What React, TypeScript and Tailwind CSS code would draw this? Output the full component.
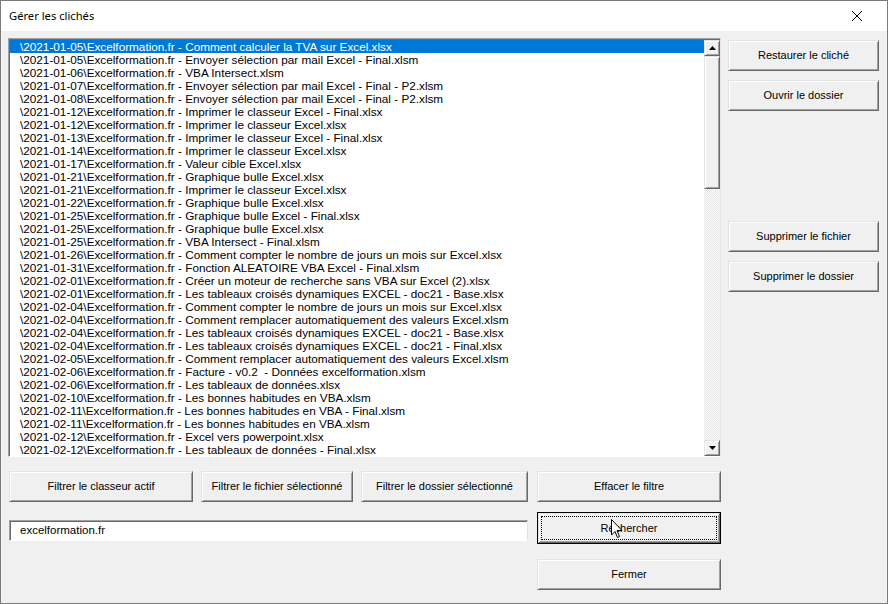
import type { ReactNode } from "react";

const files = [
  "\\2021-01-05\\Excelformation.fr - Comment calculer la TVA sur Excel.xlsx",
  "\\2021-01-05\\Excelformation.fr - Envoyer sélection par mail Excel - Final.xlsm",
  "\\2021-01-06\\Excelformation.fr - VBA Intersect.xlsm",
  "\\2021-01-07\\Excelformation.fr - Envoyer sélection par mail Excel - Final - P2.xlsm",
  "\\2021-01-08\\Excelformation.fr - Envoyer sélection par mail Excel - Final - P2.xlsm",
  "\\2021-01-12\\Excelformation.fr - Imprimer le classeur Excel - Final.xlsx",
  "\\2021-01-12\\Excelformation.fr - Imprimer le classeur Excel.xlsx",
  "\\2021-01-13\\Excelformation.fr - Imprimer le classeur Excel - Final.xlsx",
  "\\2021-01-14\\Excelformation.fr - Imprimer le classeur Excel.xlsx",
  "\\2021-01-17\\Excelformation.fr - Valeur cible Excel.xlsx",
  "\\2021-01-21\\Excelformation.fr - Graphique bulle Excel.xlsx",
  "\\2021-01-21\\Excelformation.fr - Imprimer le classeur Excel.xlsx",
  "\\2021-01-22\\Excelformation.fr - Graphique bulle Excel.xlsx",
  "\\2021-01-25\\Excelformation.fr - Graphique bulle Excel - Final.xlsx",
  "\\2021-01-25\\Excelformation.fr - Graphique bulle Excel.xlsx",
  "\\2021-01-25\\Excelformation.fr - VBA Intersect - Final.xlsm",
  "\\2021-01-26\\Excelformation.fr - Comment compter le nombre de jours un mois sur Excel.xlsx",
  "\\2021-01-31\\Excelformation.fr - Fonction ALEATOIRE VBA Excel - Final.xlsm",
  "\\2021-02-01\\Excelformation.fr - Créer un moteur de recherche sans VBA sur Excel (2).xlsx",
  "\\2021-02-01\\Excelformation.fr - Les tableaux croisés dynamiques EXCEL - doc21 - Base.xlsx",
  "\\2021-02-04\\Excelformation.fr - Comment compter le nombre de jours un mois sur Excel.xlsx",
  "\\2021-02-04\\Excelformation.fr - Comment remplacer automatiquement des valeurs Excel.xlsm",
  "\\2021-02-04\\Excelformation.fr - Les tableaux croisés dynamiques EXCEL - doc21 - Base.xlsx",
  "\\2021-02-04\\Excelformation.fr - Les tableaux croisés dynamiques EXCEL - doc21 - Final.xlsx",
  "\\2021-02-05\\Excelformation.fr - Comment remplacer automatiquement des valeurs Excel.xlsm",
  "\\2021-02-06\\Excelformation.fr - Facture - v0.2  - Données excelformation.xlsm",
  "\\2021-02-06\\Excelformation.fr - Les tableaux de données.xlsx",
  "\\2021-02-10\\Excelformation.fr - Les bonnes habitudes en VBA.xlsm",
  "\\2021-02-11\\Excelformation.fr - Les bonnes habitudes en VBA - Final.xlsm",
  "\\2021-02-11\\Excelformation.fr - Les bonnes habitudes en VBA.xlsm",
  "\\2021-02-12\\Excelformation.fr - Excel vers powerpoint.xlsx",
  "\\2021-02-12\\Excelformation.fr - Les tableaux de données - Final.xlsx",
];

const raised =
  "border border-t-[#e3e3e3] border-l-[#e3e3e3] border-b-[#696969] border-r-[#696969] bg-[#f0f0f0] shadow-[inset_1px_1px_0_#ffffff,inset_-1px_-1px_0_#a0a0a0]";

function Btn({ children, className = "" }: { children: ReactNode; className?: string }) {
  return (
    <div className={`${raised} flex items-center justify-center text-[11px] text-black ${className}`}>
      {children}
    </div>
  );
}

function Arrow({ up }: { up?: boolean }) {
  return (
    <div className={`${raised} flex h-[16px] w-[16px] items-center justify-center`}>
      <svg width="7" height="4" viewBox="0 0 7 4">
        {up ? <polygon points="0,4 7,4 3.5,0" fill="#000" /> : <polygon points="0,0 7,0 3.5,4" fill="#000" />}
      </svg>
    </div>
  );
}

export default function App() {
  return (
    <div
      className="flex h-[604px] w-[888px] flex-col border border-[#7a7a7a] bg-[#f0f0f0]"
      style={{ fontFamily: '"Liberation Sans", Arial, sans-serif' }}
    >
      {/* Title bar */}
      <div className="flex h-[30px] items-center justify-between bg-white pl-[8px] pr-[24px]">
        <span className="text-[11.2px] text-black" style={{ fontFamily: '"Noto Sans", "Open Sans", sans-serif' }}>
          Gérer les clichés
        </span>
        <svg width="12" height="12" viewBox="0 0 12 12">
          <path d="M1 1 L11 11 M11 1 L1 11" stroke="#000" strokeWidth="1" />
        </svg>
      </div>

      {/* Client area */}
      <div className="relative flex flex-1 flex-col pl-[7px] pt-[7px]">
        <div className="flex gap-[7px]">
          {/* List box */}
          <div className="flex h-[419px] w-[713px] border border-t-[#a0a0a0] border-l-[#a0a0a0] border-b-white border-r-[#e3e3e3] bg-white shadow-[inset_1px_1px_0_#696969]">
            <div className="flex-1 overflow-hidden pl-[1px] pt-[1px]">
              {files.map((f, i) => (
                <div
                  key={i}
                  className={`h-[13px] whitespace-pre pl-[10px] text-[11.75px] leading-[13px] ${
                    i === 0 ? "bg-[#0078d7] text-white" : "text-black"
                  }`}
                >
                  {f}
                </div>
              ))}
            </div>
            {/* Scrollbar */}
            <div className="flex w-[16px] flex-col pt-[1px]">
              <Arrow up />
              <div className={`${raised} h-[133px] w-[16px]`} />
              <div className="flex-1 bg-[repeating-conic-gradient(#e3e3e3_0_25%,#ffffff_0_50%)] bg-[length:2px_2px]" />
              <Arrow />
            </div>
          </div>

          {/* Right buttons */}
          <div className="flex w-[151px] flex-col pt-[2px]">
            <Btn className="h-[31px]">Restaurer le cliché</Btn>
            <Btn className="mt-[9px] h-[31px]">Ouvrir le dossier</Btn>
            <Btn className="mt-[110px] h-[31px]">Supprimer le fichier</Btn>
            <Btn className="mt-[9px] h-[31px]">Supprimer le dossier</Btn>
          </div>
        </div>

        {/* Bottom controls */}
        <div className="ml-[1px] mt-[14px] flex w-[712px] flex-col">
          <div className="flex">
            <Btn className="h-[31px] w-[184px]">Filtrer le classeur actif</Btn>
            <Btn className="ml-[8px] h-[31px] w-[152px]">Filtrer le fichier sélectionné</Btn>
            <Btn className="ml-[8px] h-[31px] w-[167px]">Filtrer le dossier sélectionné</Btn>
            <Btn className="ml-[9px] h-[31px] w-[184px]">Effacer le filtre</Btn>
          </div>
          <div className="mt-[10px] flex items-start">
            <div className="mt-[8px] flex h-[21px] w-[519px] items-center border border-t-[#a0a0a0] border-l-[#a0a0a0] border-b-white border-r-[#e3e3e3] bg-white pl-[10px] pt-[1px] text-[11.5px] text-black shadow-[inset_1px_1px_0_#696969]">
              excelformation.fr
            </div>
            <div className="relative ml-auto h-[32px] w-[184px] border border-black">
              <Btn className="h-full w-full">Rechercher</Btn>
              <div className="pointer-events-none absolute inset-[3px] border border-dotted border-black" />
              {/* mouse cursor */}
              <svg className="absolute left-[73px] top-[6px]" width="12" height="20" viewBox="0 0 12 20">
                <path
                  d="M0.5 0.5 L0.5 16 L4 12.5 L6.5 18.5 L8.5 17.5 L6 11.5 L11 11.5 Z"
                  fill="#fff"
                  stroke="#000"
                  strokeWidth="1"
                />
              </svg>
            </div>
          </div>
          <div className="mt-[15px] flex justify-end">
            <Btn className="h-[31px] w-[184px]">Fermer</Btn>
          </div>
        </div>
      </div>
    </div>
  );
}
